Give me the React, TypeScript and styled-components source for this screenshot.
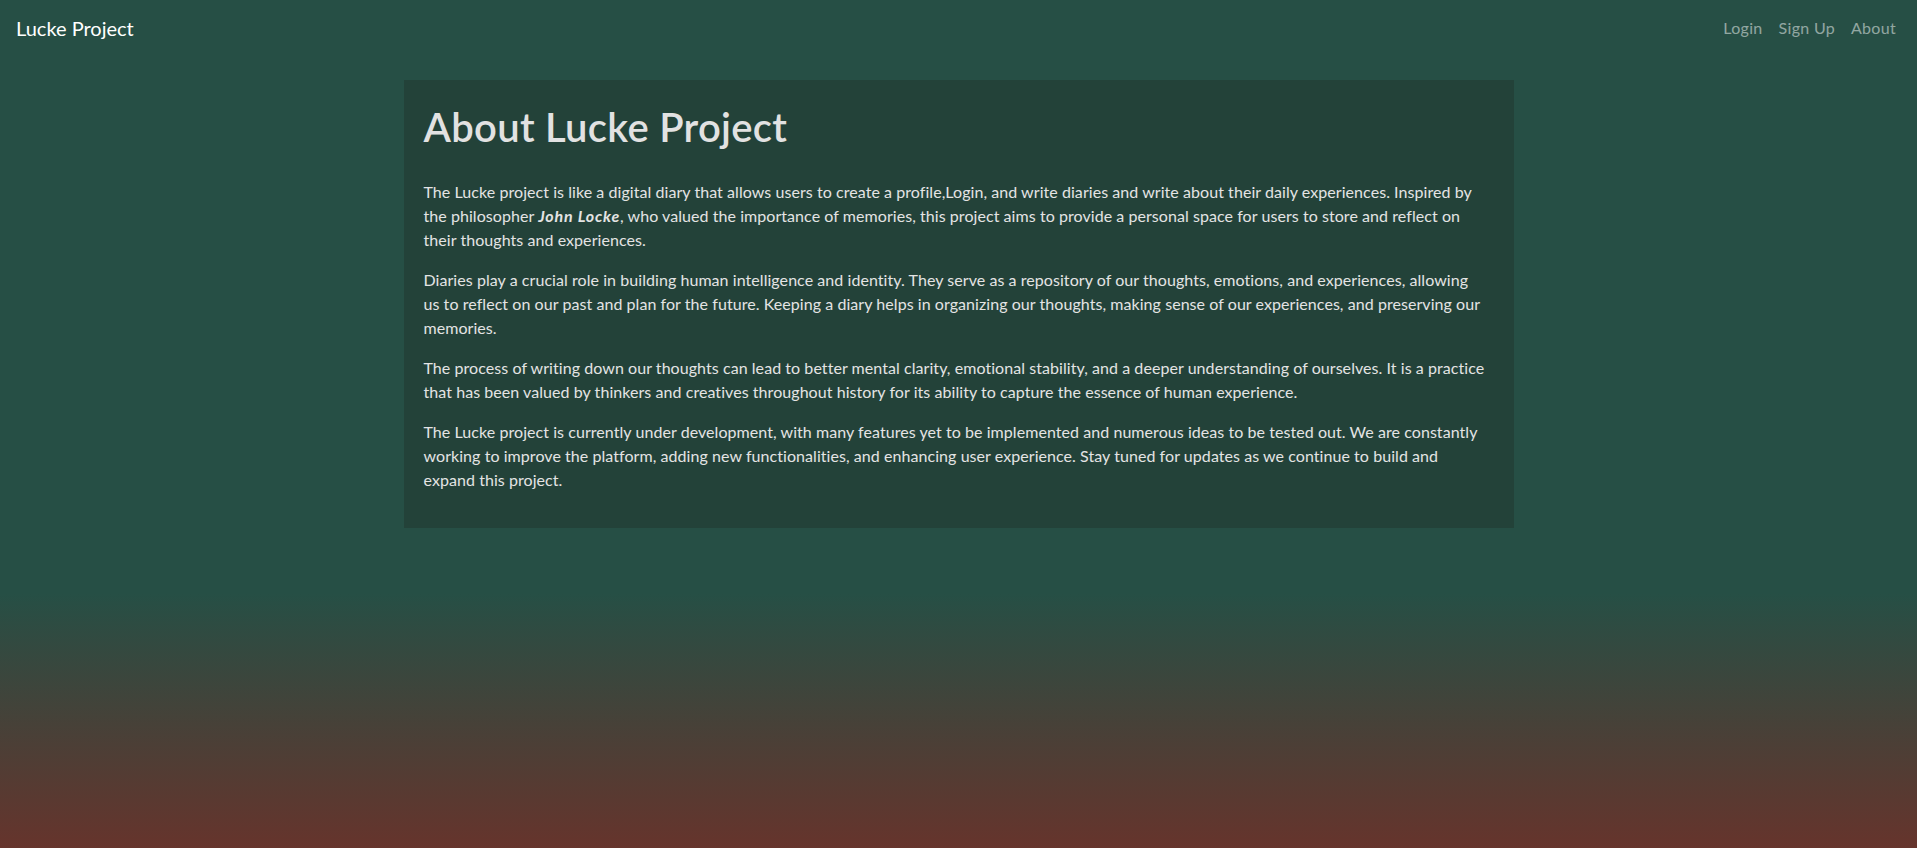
import React from "react";
import styled, { createGlobalStyle } from "styled-components";

const Global = createGlobalStyle`
  html, body { margin: 0; padding: 0; }
  html { min-height: 100%; }
  body {
    min-height: 100vh;
    background: linear-gradient(to bottom, #264f45 0%, #264f45 70%, #66342c 100%);
    font-family: Lato, "Noto Sans", sans-serif;
    color: #e2e2e2;
  }
  * { box-sizing: border-box; }
`;

const Navbar = styled.nav`
  display: flex;
  align-items: center;
  justify-content: space-between;
  padding: 8px 13px 8px 16px;
  height: 56px;
`;

const Brand = styled.a`
  font-size: 20px;
  line-height: 30px;
  padding: 5px 0;
  color: #ffffff;
  text-decoration: none;
`;

const NavList = styled.ul`
  display: flex;
  list-style: none;
  margin: 0;
  padding: 0;
`;

const NavLink = styled.a`
  display: block;
  padding: 8px;
  font-size: 16px;
  line-height: 24px;
  color: rgba(255, 255, 255, 0.5);
  text-decoration: none;
  letter-spacing: 0.3px;
`;

const Container = styled.main`
  max-width: 1140px;
  margin: 24px auto 0;
  padding: 0 15px;
`;

const Card = styled.section`
  background: #234239;
  padding: 20px;
`;

const Title = styled.h1`
  margin: 0 0 29px;
  padding-top: 3px;
  font-size: 40px;
  line-height: 48px;
  font-weight: 600;
  letter-spacing: 0.3px;
  color: #e2e2e2;
`;

const Paragraph = styled.p`
  margin: 0 0 16px;
  font-size: 16px;
  line-height: 24px;
  letter-spacing: 0.06px;
  color: #e4e4e4;
`;

const Name = styled.em`
  font-weight: 700;
  font-style: italic;
  letter-spacing: 0.8px;
`;

export default function App() {
  return (
    <>
      <Global />
      <Navbar>
        <Brand href="#">Lucke Project</Brand>
        <NavList>
          <li><NavLink href="#">Login</NavLink></li>
          <li><NavLink href="#">Sign Up</NavLink></li>
          <li><NavLink href="#">About</NavLink></li>
        </NavList>
      </Navbar>
      <Container>
        <Card>
          <Title>About Lucke Project</Title>
          <Paragraph>
            The Lucke project is like a digital diary that allows users to create a profile,Login, and write diaries and write about their daily experiences. Inspired by<br />
            the philosopher <Name>John Locke</Name>, who valued the importance of memories, this project aims to provide a personal space for users to store and reflect on<br />
            their thoughts and experiences.
          </Paragraph>
          <Paragraph>
            Diaries play a crucial role in building human intelligence and identity. They serve as a repository of our thoughts, emotions, and experiences, allowing<br />
            us to reflect on our past and plan for the future. Keeping a diary helps in organizing our thoughts, making sense of our experiences, and preserving our<br />
            memories.
          </Paragraph>
          <Paragraph>
            The process of writing down our thoughts can lead to better mental clarity, emotional stability, and a deeper understanding of ourselves. It is a practice<br />
            that has been valued by thinkers and creatives throughout history for its ability to capture the essence of human experience.
          </Paragraph>
          <Paragraph>
            The Lucke project is currently under development, with many features yet to be implemented and numerous ideas to be tested out. We are constantly<br />
            working to improve the platform, adding new functionalities, and enhancing user experience. Stay tuned for updates as we continue to build and<br />
            expand this project.
          </Paragraph>
        </Card>
      </Container>
    </>
  );
}
